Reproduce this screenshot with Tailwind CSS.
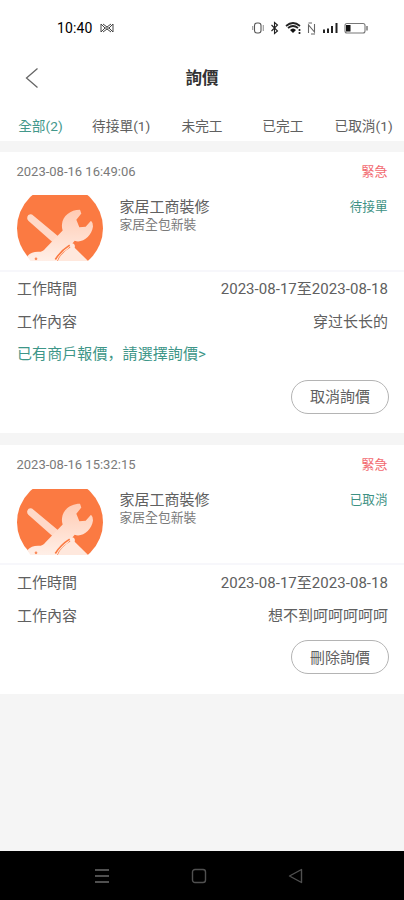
<!DOCTYPE html>
<html lang="zh-Hant">
<head>
<meta charset="utf-8">
<meta name="viewport" content="width=device-width, initial-scale=1">
<title>詢價</title>
<script src="https://cdn.jsdelivr.net/npm/@tailwindcss/browser@4"></script>
</head>
<body class="flex h-[900px] w-[404px] flex-col overflow-hidden bg-[#f5f5f5] font-[Roboto,'Noto_Sans_CJK_TC',sans-serif] text-[15px] text-[#606060]">
<svg class="absolute h-0 w-0">
  <defs>
    <linearGradient id="tool" x1="0" y1="0" x2="0" y2="1"><stop offset="0" stop-color="#ffcab2"/><stop offset="1" stop-color="#fff1ea"/></linearGradient>
    <symbol id="repair" viewBox="51 136 258 195">
      <circle cx="180" cy="234" r="129" fill="#fb7a42"/>
      <path d="M82 200Q84 190 96 193L179 262L163 281L85 212Q80 206 82 200Z" fill="#ffd9c8"/>
      <path d="M240 179C211 179 188 198 186 222Q185 234 188 241L136 295Q128 306 114 305Q94 305 82 318L96 340H168L176 322Q188 305 204 296L224 272C248 280 275 258 279 229Q279 217 273 212L257 230L238 231L229 209L244 190Z" fill="url(#tool)"/>
      <path d="M174 331Q184 307 211 292Q207 281 216 279Q227 280 224 293L272 340H170Z" fill="#ffe8dd"/>
      <path d="M209 285Q182 302 166 328" fill="none" stroke="#fb7a42" stroke-width="5"/>
      <circle cx="108" cy="326" r="4" fill="#fb8b5b"/>
    </symbol>
  </defs>
</svg>

<header class="h-[141px] shrink-0 bg-white">
  <div class="flex h-[54px] items-center pt-[1px] pr-[34px] pl-[57px] text-black">
    <span class="text-[14px] leading-none tracking-[0.1px]">10:40</span>
    <svg class="ml-[8px] h-[10px] w-[14px]" viewBox="0 0 14 10" fill="none" stroke="#444" stroke-width="1"><path d="M1 1L5 5L1 9ZM13 1L9 5L13 9ZM3 1L7 4L11 1M3 9L7 6L11 9M5 5H9"/></svg>
    <div class="ml-auto flex items-center">
      <svg class="h-[14px] w-[119px]" viewBox="0 0 119 14" fill="none" stroke="#222" stroke-width="1.1">
        <rect x="3.5" y="2" width="6.5" height="10" rx="2.5" stroke="#555"/><path d="M1.7 5V9M12.3 4V10" stroke="#999"/>
        <path d="M20.5 4L26.5 10L23.5 12.5V1.5L26.5 4L20.5 10"/>
        <path d="M35 5Q42 -1 49 5M37 7Q42 3 47 7" stroke-width="1.7"/><path d="M39 9Q42 6 45 9L42 12Z" fill="#111" stroke="none"/><path d="M48.5 8V13" stroke-width="1.7" stroke-dasharray="2 1"/>
        <path d="M57.5 12V4L63.5 11V3M57.5 2H61M60 13H64" stroke="#666"/>
        <path d="M73 12V8.5M77 12V7.5M81 12V5M85.5 12V2" stroke-width="2"/>
        <rect x="94" y="2.5" width="20" height="9.5" rx="2" stroke="#777"/><rect x="95" y="4" width="4.5" height="6.5" fill="#111" stroke="none"/><path d="M116 5V9.5" stroke="#777" stroke-width="1.5"/>
      </svg>
    </div>
  </div>
  <div class="grid h-[48px] grid-cols-3 items-center px-[25px]">
    <svg class="h-[20px] w-[14px]" viewBox="0 0 14 20" fill="none" stroke="#666" stroke-width="1.3"><path d="M12.5 .5L1.5 10L12.5 19.5"/></svg>
    <h1 class="pt-[2px] text-center text-[16.5px] leading-none font-bold text-[#333]">詢價</h1>
  </div>
  <nav class="grid h-[39px] grid-cols-5 items-center pt-[10px] text-center text-[13.7px] leading-none whitespace-nowrap">
    <span class="text-[#43988b]">全部(2)</span><span>待接單(1)</span><span>未完工</span><span>已完工</span><span>已取消(1)</span>
  </nav>
</header>

<main class="flex h-[710px] shrink-0 flex-col gap-[12px] pt-[11px]">
  <article class="h-[281px] shrink-0 bg-white">
    <div class="flex h-[38px] items-center justify-between px-[16.5px] text-[13px] leading-none"><time class="text-[#7a7a7a]">2023-08-16 16:49:06</time><span class="text-[#f26a70]">緊急</span></div>
    <div class="flex h-[82px] items-start border-b-2 border-[#f7f7fb] px-[16.5px] pt-[5px]">
      <svg class="h-[66px] w-[86px]"><use href="#repair"/></svg>
      <div class="ml-[17px] flex flex-col pt-[5px] leading-none"><h2>家居工商裝修</h2><p class="mt-[4px] text-[12.8px] text-[#7a7a7a]">家居全包新裝</p></div>
      <span class="ml-auto pt-[6px] text-[12.6px] leading-none text-[#3d9183]">待接單</span>
    </div>
    <div class="pt-[1px] pr-[16px] pl-[17px] leading-[32.5px]">
      <div class="flex justify-between"><span>工作時間</span><span class="tracking-[0.04px]">2023-08-17至2023-08-18</span></div>
      <div class="flex justify-between"><span>工作內容</span><span lang="zh-Hans" class="font-[Roboto,'Noto_Sans_CJK_SC',sans-serif]">穿过长长的</span></div>
      <div lang="zh-Hans" class="font-[Roboto,'Noto_Sans_CJK_SC',sans-serif] tracking-[0.08px] text-[#3d9688]">已有商戶報價，請選擇詢價&gt;</div>
    </div>
    <div class="flex justify-end pt-[9px] pr-[15px]"><button class="h-[34px] w-[98px] rounded-full border border-[#b4b4b4] pt-[2px] text-[15px] leading-none">取消詢價</button></div>
  </article>
  <article class="h-[249px] shrink-0 bg-white">
    <div class="flex h-[38px] items-center justify-between px-[16.5px] text-[13px] leading-none"><time class="text-[#7a7a7a]">2023-08-16 15:32:15</time><span class="text-[#f26a70]">緊急</span></div>
    <div class="flex h-[82px] items-start border-b-2 border-[#f7f7fb] px-[16.5px] pt-[6px]">
      <svg class="h-[66px] w-[86px]"><use href="#repair"/></svg>
      <div class="ml-[17px] flex flex-col pt-[4px] leading-none"><h2>家居工商裝修</h2><p class="mt-[4px] text-[12.8px] text-[#7a7a7a]">家居全包新裝</p></div>
      <span class="ml-auto pt-[5px] text-[12.6px] leading-none text-[#3d9183]">已取消</span>
    </div>
    <div class="pt-[2px] pr-[16px] pl-[17px] leading-[32.5px]">
      <div class="flex justify-between"><span>工作時間</span><span class="tracking-[0.04px]">2023-08-17至2023-08-18</span></div>
      <div class="flex justify-between"><span>工作內容</span><span>想不到呵呵呵呵呵</span></div>
    </div>
    <div class="flex justify-end pt-[8px] pr-[15px]"><button class="h-[34px] w-[98px] rounded-full border border-[#b4b4b4] pt-[2px] text-[15px] leading-none">刪除詢價</button></div>
  </article>
</main>

<footer class="flex h-[49px] shrink-0 items-center gap-[81px] bg-black pl-[94px]">
  <svg class="h-[16px] w-[16px]" viewBox="0 0 16 16" fill="none" stroke="#505050" stroke-width="1.8"><path d="M1 2H15M1 8H15M1 14H15"/></svg>
  <svg class="h-[16px] w-[16px]" viewBox="0 0 16 16" fill="none" stroke="#505050" stroke-width="1.4"><rect x="1.5" y="1.5" width="13" height="13" rx="2.5"/></svg>
  <svg class="h-[16px] w-[16px]" viewBox="0 0 16 16" fill="none" stroke="#505050" stroke-width="1.4" stroke-linejoin="round"><path d="M13.5 1.5V14.5L1.5 8Z"/></svg>
</footer>
</body>
</html>
